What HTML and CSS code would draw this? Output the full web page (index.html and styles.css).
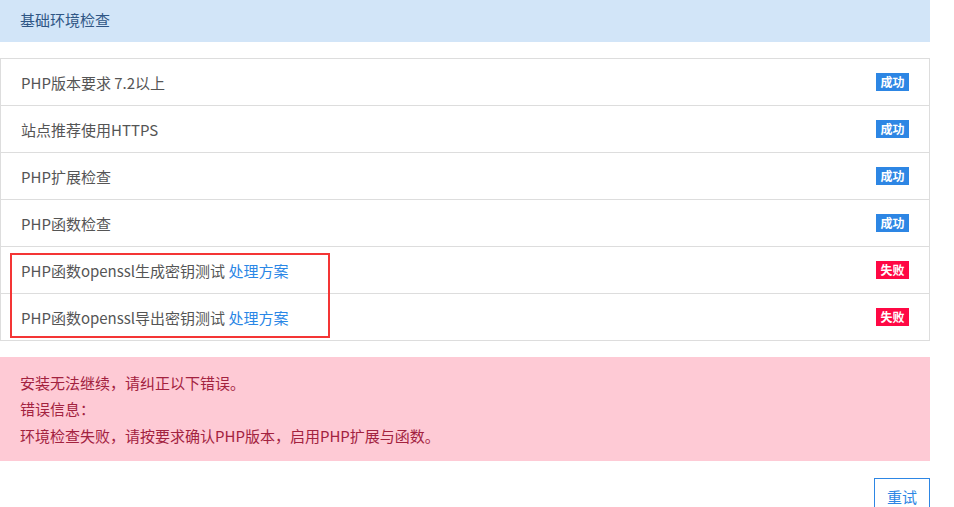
FILE: index.html
```html
<!DOCTYPE html>
<html lang="zh-CN">
<head>
<meta charset="utf-8">
<title>基础环境检查</title>
<link rel="stylesheet" href="styles.css">
</head>
<body>
<div class="page">
  <div class="panel-head">基础环境检查</div>
  <ul class="check-list">
    <li class="row"><span>PHP版本要求 7.2以上</span><span class="badge ok">成功</span></li>
    <li class="row"><span>站点推荐使用HTTPS</span><span class="badge ok">成功</span></li>
    <li class="row"><span>PHP扩展检查</span><span class="badge ok">成功</span></li>
    <li class="row"><span>PHP函数检查</span><span class="badge ok">成功</span></li>
    <li class="row"><span>PHP函数openssl生成密钥测试 <a class="fix" href="#">处理方案</a></span><span class="badge fail">失败</span></li>
    <li class="row"><span>PHP函数openssl导出密钥测试 <a class="fix" href="#">处理方案</a></span><span class="badge fail">失败</span></li>
    <div class="mark"></div>
  </ul>
  <div class="alert">
    <p>安装无法继续，请纠正以下错误。</p>
    <p>错误信息：</p>
    <p>环境检查失败，请按要求确认PHP版本，启用PHP扩展与函数。</p>
  </div>
  <div class="actions"><button class="btn">重试</button></div>
</div>
</body>
</html>
```
FILE: styles.css
```css
html, body { margin: 0; padding: 0; background: #fff; }
body {
  font-family: "Noto Sans CJK SC", "Noto Sans", sans-serif;
  font-size: 15px;
  color: #555;
}
.page { width: 930px; }
.panel-head {
  height: 42px;
  line-height: 40px;
  padding-left: 20px;
  background: #d2e5f8;
  color: #2f5685;
}
.check-list {
  position: relative;
  list-style: none;
  margin: 16px 0 0;
  padding: 0;
  border: 1px solid #ddd;
}
.row {
  display: flex;
  align-items: center;
  justify-content: space-between;
  height: 46px;
  padding: 0 20px;
  border-top: 1px solid #ddd;
}
.row:first-child { border-top: none; }
.fix { color: #2a87e6; text-decoration: none; }
.badge {
  display: inline-block;
  width: 33px;
  height: 18px;
  line-height: 18px;
  text-align: center;
  color: #fff;
  font-size: 12px;
  font-weight: bold;
}
.badge.ok { background: #2d86e4; }
.badge.fail { background: #ff0844; }
.mark {
  position: absolute;
  left: 9px;
  top: 194px;
  width: 316px;
  height: 81px;
  border: 2px solid #f43535;
}
.alert {
  margin-top: 16px;
  padding: 13px 20px 12px;
  background: #fecad5;
  color: #a3223f;
}
.alert p { margin: 0; line-height: 26.4px; }
.actions {
  display: flex;
  justify-content: flex-end;
  margin-top: 17px;
}
.btn {
  width: 56px;
  height: 36px;
  background: #fff;
  border: 1px solid #2d86e4;
  color: #2d86e4;
  font-family: inherit;
  font-size: 15px;
  padding: 0;
}
```
